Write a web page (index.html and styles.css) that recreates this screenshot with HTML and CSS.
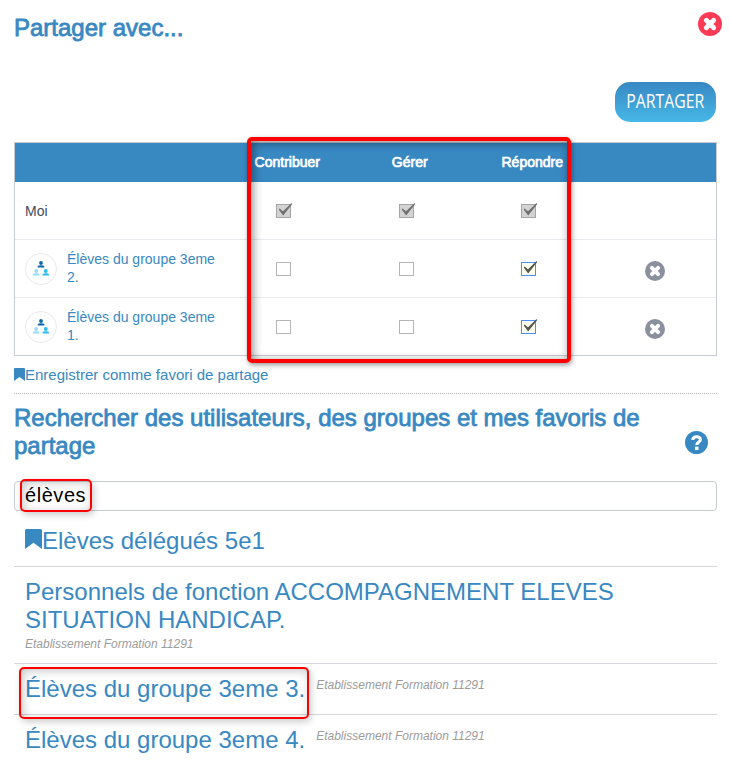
FILE: index.html
```
<!DOCTYPE html>
<html lang="fr">
<head>
<meta charset="utf-8">
<title>Partager avec...</title>
<link rel="stylesheet" href="styles.css">
</head>
<body>
<svg class="defs" width="0" height="0" aria-hidden="true">
  <symbol id="cross" viewBox="0 0 24 24"><circle cx="12" cy="12" r="12" fill="currentColor"/><path d="M8.300 8.300l7.400 7.400M15.700 8.300l-7.400 7.400" stroke="#fff" stroke-width="4.800" stroke-linecap="round"/></symbol>
  <symbol id="bookmark" viewBox="0 0 17 20"><path d="M0 1.500Q0 0 1.500 0H15.500Q17 0 17 1.500V20L8.500 13.800 0 20z" fill="currentColor"/></symbol>
  <symbol id="group" viewBox="0 0 16 15">
    <g fill="#0b69a8"><circle cx="8" cy="2" r="1.900"/><path d="M4.700 6.500V5.500Q5 4.300 8 4.300T11.300 5.500V6.500z"/></g>
    <g fill="#96dcfb"><circle cx="3.200" cy="10" r="1.900"/><path d="M0 14.500V13.500Q0 12.300 3.200 12.300T6.400 13.500V14.500z"/></g>
    <g fill="#2cbcf0"><circle cx="12.800" cy="10" r="1.900"/><path d="M9.600 14.500V13.500Q9.600 12.300 12.800 12.300T16 13.500V14.500z"/></g>
  </symbol>
  <symbol id="tick" viewBox="0 0 17 16"><path d="M3.200 6L7 9.300 15.800.6 7.200 11.500z" fill="currentColor" stroke="currentColor" stroke-width="1.300"/></symbol>
</svg>
<main class="panel">
  <header class="top">
    <h1>Partager avec...</h1>
    <svg class="close"><use href="#cross"/></svg>
  </header>
  <div class="actions"><button class="share"><span>PARTAGER</span></button></div>

  <section class="rights">
    <div class="row head"><span></span><span>Contribuer</span><span>Gérer</span><span>Répondre</span><span></span></div>
    <div class="row">
      <div class="who me">Moi</div>
      <i class="box off"><svg><use href="#tick"/></svg></i>
      <i class="box off"><svg><use href="#tick"/></svg></i>
      <i class="box off"><svg><use href="#tick"/></svg></i>
      <span></span>
    </div>
    <div class="row">
      <div class="who"><span class="avatar"><svg><use href="#group"/></svg></span><span class="name">Élèves du groupe 3eme 2.</span></div>
      <i class="box"></i>
      <i class="box"></i>
      <i class="box on"><svg><use href="#tick"/></svg></i>
      <svg class="remove"><use href="#cross"/></svg>
    </div>
    <div class="row">
      <div class="who"><span class="avatar"><svg><use href="#group"/></svg></span><span class="name">Élèves du groupe 3eme 1.</span></div>
      <i class="box"></i>
      <i class="box"></i>
      <i class="box on"><svg><use href="#tick"/></svg></i>
      <svg class="remove"><use href="#cross"/></svg>
    </div>
    <div class="mark mark-rights"></div>
  </section>

  <div class="favorite"><svg><use href="#bookmark"/></svg><span>Enregistrer comme favori de partage</span></div>

  <div class="search-head">
    <h2>Rechercher des utilisateurs, des groupes et mes favoris de partage</h2>
    <svg class="help" viewBox="0 0 24 24"><circle cx="12" cy="12" r="12" fill="currentColor"/><path d="M8 9.300C8.500 5 16.200 5 16.100 9.200 16 11.600 12.300 11.500 12.300 14.600" fill="none" stroke="#fff" stroke-width="3.200"/><rect x="10.500" y="16.300" width="3.600" height="3.500" fill="#fff"/></svg>
  </div>
  <div class="search"><span>élèves</span><div class="mark thin mark-search"></div></div>

  <ul class="results">
    <li><svg><use href="#bookmark"/></svg><span>Elèves délégués 5e1</span></li>
    <li class="stacked"><span>Personnels de fonction ACCOMPAGNEMENT ELEVES SITUATION HANDICAP.</span><em>Etablissement Formation 11291</em></li>
    <li><span>Élèves du groupe 3eme 3.</span><em>Etablissement Formation 11291</em><div class="mark thin mark-result"></div></li>
    <li><span>Élèves du groupe 3eme 4.</span><em>Etablissement Formation 11291</em></li>
  </ul>
</main>
</body>
</html>
```
FILE: styles.css
```
* { box-sizing: border-box; }
body { margin: 0; background: #fff; color: #3888c2; font-family: "Liberation Sans", Arial, sans-serif; overflow: hidden; }
.defs { display: block; position: absolute; }
.panel { width: 703px; height: 764px; margin-left: 14px; padding-top: 12px; }
h1, h2 { margin: 0; font-size: 24px; line-height: 28px; font-weight: 400; -webkit-text-stroke: .8px currentColor; }
.top { display: flex; justify-content: space-between; height: 70px; padding-top: 2px; margin-right: -5px; }
.close { width: 24px; height: 24px; margin-top: -2px; color: #ff3a55; }
.actions { display: flex; justify-content: flex-end; height: 60px; padding-right: 1px; }
.share { width: 101px; height: 40px; padding: 0 0 3px; border: 0; border-radius: 15px; background: linear-gradient(#3888c2, #46b8e8); color: #fff; font: 400 20px "Open Sans", sans-serif; display: flex; align-items: center; justify-content: center; }
.share span { transform: scaleX(.79); }

.rights { position: relative; border: 1px solid #c7cbd3; }
.row { display: grid; grid-template-columns: 211px repeat(4, 1fr); height: 58px; border-bottom: 1px solid #e8e9ec; font-size: 14px; line-height: 18px; align-items: center; }
.row:nth-child(4) { height: 57px; border-bottom: 0; }
.head { height: 39px; padding-bottom: 1px; background: #3888c2; border: 0; color: #fff; text-align: center; -webkit-text-stroke: .7px #fff; }
.who { display: flex; gap: 10px; align-items: center; padding-left: 10px; }
.name { padding-bottom: 2px; }
.me { color: #444a5c; }
.avatar { flex: none; display: flex; align-items: center; justify-content: center; width: 32px; height: 32px; border: 1px solid #e8e9ec; border-radius: 50%; }
.avatar svg { width: 16px; height: 15px; }
.box { justify-self: center; width: 15px; height: 14px; margin-right: 7px; border: 1px solid #b5b5b5; background: #fff; }
.box svg { display: block; width: 17px; height: 16px; margin: -2px 0 0 -1px; overflow: visible; }
.off { background: #d3d3d3; border-color: #a5a5a5; color: #707070; }
.on { border-color: #4c8ff5; background: #ffffed; color: #56594f; }
.remove { justify-self: center; width: 20px; height: 20px; margin-top: 4px; color: #8b909f; }

.mark { position: absolute; border: 4px solid #f00; border-radius: 5px; box-shadow: 1px 2px 5px rgba(0,0,0,.4), inset 2px 2px 10px rgba(0,0,0,.45); }
.thin { border-width: 2px; box-shadow: 2px 3px 7px rgba(0,0,0,.2), inset 2px 2px 10px rgba(0,0,0,.22); }
.mark-rights { left: 232px; top: -6px; width: 324px; height: 226px; }
.mark-search { left: 5px; top: -3px; width: 72px; height: 33px; }
.mark-result { left: 5px; top: 3px; width: 290px; height: 52px; }

.favorite { display: flex; align-items: center; height: 38px; border-bottom: 1px dotted #bbb; font-size: 15px; }
.favorite svg { width: 11px; height: 13px; }
.search-head { display: flex; justify-content: space-between; align-items: flex-end; padding: 10px 9px 0 0; height: 66px; }
.search-head h2 { width: 640px; }
.help { width: 23px; height: 23px; margin-bottom: 6px; }
.search { position: relative; display: flex; align-items: center; height: 30px; margin-top: 21px; padding: 0 0 2px 10px; border: 1px solid #c7cbd3; border-radius: 4px; color: #000; font-size: 20px; line-height: 26px; letter-spacing: .55px; }

.results { list-style: none; margin: 5px 0 0; padding: 0; font-size: 24px; line-height: 28px; }
.results li { position: relative; display: flex; height: 51px; padding: 11px 11px 0; border-bottom: 1px solid #d5d7dc; }
.results li:last-child { border: 0; }
.results svg { width: 17px; height: 20px; margin-top: 2px; }
.results em { margin-left: 11px; color: #9b9b9b; font-size: 12px; line-height: 21px; }
.results .stacked { display: block; height: 97px; }
.stacked span, .stacked em { display: block; }
.results .stacked em { margin: 0; }
```
